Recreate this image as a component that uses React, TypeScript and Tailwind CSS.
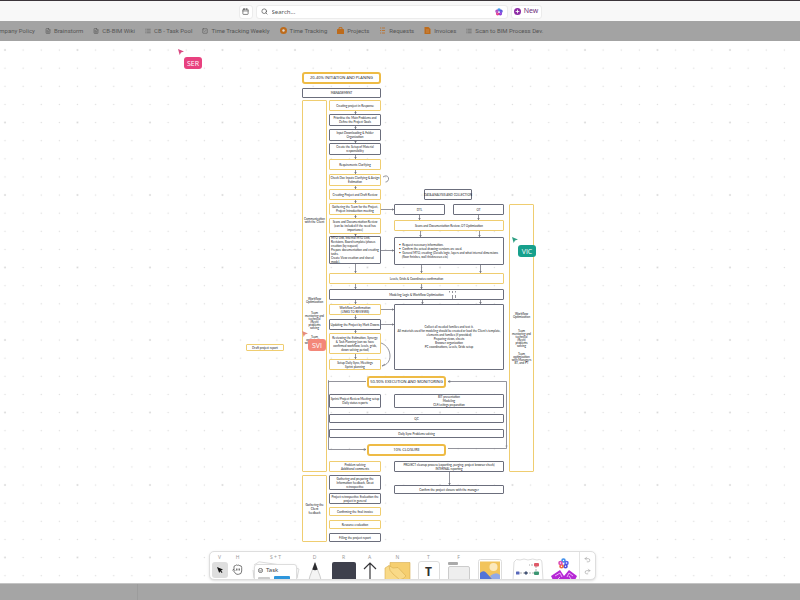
import React from "react";
import { Calendar, FileText, List, Plus, Search, SquareCheck, Undo2, Redo2 } from "lucide-react";

type Tone = "dark" | "yellow" | "title";

interface BoardNode {
  x: number;
  y: number;
  w: number;
  h: number;
  tone: Tone;
  lines: string[];
  text?: string;
}

const toneClass: Record<Tone, string> = {
  dark: "border border-[#6b6e7c] text-[#16171c] rounded-[1px] text-[3px] leading-[4px]",
  yellow: "border border-[#efcd70] text-[#16171c] rounded-[1px] text-[3px] leading-[4px]",
  title: "border-2 border-[#eebb45] text-[#101114] rounded-[3px] font-['Open_Sans',sans-serif] text-[4px] leading-[4px] font-medium",
};

const dense = "leading-[3px]";

const nodes: BoardNode[] = [
  { x: 302, y: 31, w: 79, h: 12, tone: "title", lines: ["20-40% INITIATION AND PLANING"] },
  { x: 302, y: 47, w: 79, h: 10, tone: "dark", lines: ["MANAGEMENT"] },
  { x: 329, y: 59, w: 52, h: 11, tone: "yellow", lines: ["Creating project in Response"] },
  { x: 329, y: 73, w: 52, h: 12, tone: "dark", lines: ["Prioritise the Main Problems and", "Define the Project Goals"] },
  { x: 329, y: 88, w: 52, h: 12, tone: "dark", lines: ["Input Downloading & Folder", "Organization"] },
  { x: 329, y: 102, w: 52, h: 12, tone: "dark", lines: ["Create the Setup of Material", "responsibility"] },
  { x: 329, y: 118, w: 52, h: 11, tone: "yellow", lines: ["Requirements Clarifying"] },
  { x: 329, y: 133, w: 52, h: 12, tone: "yellow", lines: ["Check Doc Inputs Clarifying & Assign", "Estimation"], text: dense },
  { x: 329, y: 148, w: 52, h: 11, tone: "yellow", lines: ["Creating Project and Draft Review"] },
  { x: 329, y: 162, w: 52, h: 12, tone: "yellow", lines: ["Gathering the Team for the Project,", "Project Introduction meeting"] },
  { x: 329, y: 177, w: 52, h: 16, tone: "yellow", lines: ["Scans and Documentation Review", "(can be included if the need has", "importance)"] },
  { x: 329, y: 195, w: 52, h: 28, tone: "dark", lines: ["MTO Link, Internal MTO Link,", "Revisions, Board template/phases", "creation (by request)", "Prepare documentation and creating", "tasks.", "Create View creation and shared", "model."], text: "leading-[3px] items-start pl-px" },
  { x: 329, y: 232, w: 175, h: 11, tone: "yellow", lines: ["Levels, Grids & Coordinates confirmation"] },
  { x: 329, y: 248, w: 175, h: 11, tone: "dark", lines: ["Modeling Logic & Workflow Optimization"] },
  { x: 329, y: 263, w: 52, h: 11, tone: "yellow", lines: ["Workflow Confirmation", "(LINKS TO REVIEWS)"], text: dense },
  { x: 329, y: 278, w: 52, h: 11, tone: "dark", lines: ["Updating the Project by Mark Downs"] },
  { x: 329, y: 292, w: 52, h: 21, tone: "yellow", lines: ["Reviewing the Estimation, Synergy", "& Task Planning (can we have", "confirmed workflow, levels, grids,", "down solving period)"] },
  { x: 329, y: 318, w: 52, h: 11, tone: "yellow", lines: ["Setup Daily Sync, Meetings", "Sprint planning"], text: dense },
  { x: 424, y: 148, w: 48, h: 11, tone: "dark", lines: ["DATA ANALYSIS AND COLLECTION"] },
  { x: 394, y: 163, w: 51, h: 11, tone: "dark", lines: ["DTL"] },
  { x: 453, y: 163, w: 51, h: 11, tone: "dark", lines: ["OT"] },
  { x: 394, y: 179, w: 110, h: 11, tone: "yellow", lines: ["Scans and Documentation Review, OT Optimization"] },
  { x: 394, y: 196, w: 110, h: 28, tone: "dark", lines: ["•  Request necessary information.", "•  Confirm the actual drawing versions are used.", "•  General MTO, creating (Details logic, layers and what internal dimensions", "    (floor finishes, wall thicknesses etc)"], text: "leading-[3px] items-start pl-1" },
  { x: 394, y: 263, w: 110, h: 66, tone: "dark", lines: ["Collect all needed families and test it.", "All materials used for modeling should be created or load the Client's template,", "elements and families (if provided)", "Preparing views, sheets", "Browser organization", "PC coordinations, Levels, Grids setup"], text: dense },
  { x: 367, y: 335, w: 79, h: 12, tone: "title", lines: ["50-90% EXECUTION AND MONITORING"] },
  { x: 329, y: 353, w: 52, h: 14, tone: "dark", lines: ["Sprint/Project Review Meeting setup", "Daily status reports"], text: dense },
  { x: 394, y: 353, w: 110, h: 14, tone: "dark", lines: ["BIT presentation", "Modeling", "CLF/estings preparation"], text: dense },
  { x: 329, y: 373, w: 175, h: 9, tone: "dark", lines: ["QC"] },
  { x: 329, y: 388, w: 175, h: 9, tone: "dark", lines: ["Daily Sync Problems solving"] },
  { x: 367, y: 403, w: 79, h: 12, tone: "title", lines: ["10% CLOSURE"] },
  { x: 329, y: 420, w: 52, h: 11, tone: "yellow", lines: ["Problem solving", "Additional comments"], text: dense },
  { x: 394, y: 420, w: 110, h: 11, tone: "dark", lines: ["PROJECT cleanup process (exporting, purging, project browser check)", "INTERNAL reporting"], text: dense },
  { x: 394, y: 444, w: 110, h: 9, tone: "dark", lines: ["Confirm the project closure with the manager"] },
  { x: 329, y: 434, w: 52, h: 15, tone: "dark", lines: ["Gathering and preparing the", "Information feedback, Great", "retrospective"] },
  { x: 329, y: 452, w: 52, h: 11, tone: "dark", lines: ["Project retrospective Evaluation the", "project in general"], text: dense },
  { x: 329, y: 466, w: 52, h: 9, tone: "yellow", lines: ["Confirming the final invoice"] },
  { x: 329, y: 479, w: 52, h: 9, tone: "yellow", lines: ["Resource evaluation"] },
  { x: 329, y: 492, w: 52, h: 9, tone: "dark", lines: ["Filling the project report"] },
  { x: 246, y: 303, w: 38, h: 7, tone: "yellow", lines: ["Draft project report"] },
  { x: 302, y: 59, w: 25, h: 372, tone: "yellow", lines: [] },
  { x: 302, y: 434, w: 25, h: 67, tone: "yellow", lines: ["Gathering the", "Client", "feedback"] },
  { x: 509, y: 163, w: 25, h: 268, tone: "yellow", lines: [] },
];

const captions = [
  { x: 302, y: 177, lines: ["Communication", "with the Client"] },
  { x: 302, y: 257, lines: ["Workflow", "Optimization"] },
  { x: 302, y: 271, lines: ["Team", "mentoring and", "technical", "(Revit)", "problems", "solving"] },
  { x: 302, y: 295, lines: ["Team", "optimization", "with Managers"] },
  { x: 509, y: 272, lines: ["Workflow", "Optimization"] },
  { x: 509, y: 289, lines: ["Team", "mentoring and", "technical", "(Revit)", "problems", "solving"] },
  { x: 509, y: 312, lines: ["Team", "optimization", "with Managers", "BT, and PT"] },
];

const down: [number, number, number][] = [
  [355, 70, 73], [355, 85, 88], [355, 100, 102], [355, 114, 118], [355, 129, 133],
  [355, 145, 148], [355, 159, 162], [355, 174, 177], [355, 193, 195], [355, 223, 232],
  [355, 243, 248], [355, 259, 263], [355, 274, 278], [355, 289, 292], [355, 313, 318],
  [419, 174, 179], [478, 174, 179], [420, 190, 196], [479, 190, 196], [421, 224, 232],
  [480, 224, 232], [421, 243, 248], [422, 259, 263], [480, 259, 263], [449, 431, 444],
];

const across = [168, 209, 268, 283];

function Connectors() {
  return (
    <svg className="absolute left-0 top-0 h-[542px] w-[800px]" fill="none" stroke="#777983" aria-hidden="true">
      {down.map(([x, a, b]) => (
        <g key={`${x}-${a}`}>
          <path d={`M${x + 0.5} ${a}V${b}`} strokeWidth="0.8" />
          <path d={`M${x - 0.8} ${b - 2}h2.6l-1.3 2z`} fill="#777983" stroke="none" />
        </g>
      ))}
      {across.map((y) => (
        <g key={y}>
          <path d={`M381 ${y + 0.5}H394`} strokeWidth="0.8" />
          <path d={`M392 ${y - 0.8}v2.6l2-1.3z`} fill="#777983" stroke="none" />
        </g>
      ))}
      <path d="M366 340.5H328.5V408.5H366M448 340.5H506.5V407.5H448" strokeWidth="0.8" />
      <path d="M328.5 339v3M364 407.500l2 1-2 1zM450 339.500l-2 1 2 1zM505.500 405h2" strokeWidth="0.6" />
      <path d="M381 302c6 2 9 8 9 13s-3 9-8 10M382 325l3-2" strokeWidth="0.8" />
      <path d="M383 136c3-2 5-1 5.500 1s-1 4-3 4" strokeWidth="0.8" />
      <path d="M449.500 250v1.500M452.500 250v2M455.500 250v1.500M452.500 254v4M455.500 254v3" strokeWidth="0.8" />
    </svg>
  );
}

function CursorTag({ name, x, y, tag, pointer }: { name: string; x: number; y: number; tag: string; pointer: string }) {
  return (
    <div className="absolute" style={{ left: x, top: y }}>
      <svg className={`size-[6px] ${pointer}`} viewBox="0 0 6 6" fill="currentColor" aria-hidden="true">
        <path d="M0 0l6 2.600-3 1-1.300 2.400z" />
      </svg>
      <span className={`ml-[6px] mt-[2px] flex h-3 w-[18px] items-center justify-center rounded-[3px] font-['Open_Sans',sans-serif] text-[7px] font-medium leading-none text-white ${tag}`}>
        {name}
      </span>
    </div>
  );
}

function Petals({ className }: { className: string }) {
  return (
    <svg className={className} viewBox="0 0 12 12" fill="none" strokeWidth="2.200" aria-hidden="true">
      <circle cx="6" cy="3" r="1.500" stroke="#3b9bea" />
      <circle cx="9" cy="5" r="1.500" stroke="#5a55d8" />
      <circle cx="8" cy="8.600" r="1.500" stroke="#8c3cdb" />
      <circle cx="4" cy="8.600" r="1.500" stroke="#e3408f" />
      <circle cx="3" cy="5" r="1.500" stroke="#b04fc4" />
      <circle cx="6" cy="6.200" r="1.200" fill="#fff" />
    </svg>
  );
}

function Header() {
  return (
    <header className="flex h-[21px] shrink-0 items-center justify-center gap-[3px] border-t border-[#3b353a] bg-[#f8f8f8] pr-5 pt-px">
      <button aria-label="Calendar" className="flex h-[14px] w-[14px] items-center justify-center rounded-[3px] border border-[#ececec] bg-white text-[#555]">
        <Calendar className="size-[7px]" strokeWidth={2.4} />
      </button>
      <label className="flex h-[14px] w-[252px] items-center rounded-[3px] border border-[#ececec] bg-white px-1">
        <Search className="size-[7px] shrink-0 text-[#555]" strokeWidth={2.4} />
        <input aria-label="Search" placeholder="Search..." className="ml-1 min-w-0 flex-1 bg-transparent text-[6px] leading-[8px] outline-none placeholder:text-[#555]" />
        <Petals className="size-2 shrink-0" />
      </label>
      <button className="flex h-[14px] w-[31px] items-center justify-center gap-[3px] rounded-[3px] border border-[#ececec] bg-white text-[7px] text-[#70307c]">
        <span className="flex size-[7px] items-center justify-center rounded-full bg-[#8d2ba5] text-white">
          <Plus className="size-[5px]" strokeWidth={4} />
        </span>
        New
      </button>
    </header>
  );
}

type Mark = "doc" | "list" | "check" | "ring" | "bag" | "rows" | "invoice" | "none";

function BookmarkIcon({ mark }: { mark: Mark }) {
  if (mark === "none") return null;
  if (mark === "doc") return <FileText className="size-[6px]" strokeWidth={2.2} />;
  if (mark === "list") return <List className="size-[6px]" strokeWidth={2.2} />;
  if (mark === "check") return <SquareCheck className="size-[6px]" strokeWidth={2.2} />;
  return (
    <svg className="size-[7px]" viewBox="0 0 7 7" fill="none" aria-hidden="true">
      {mark === "ring" && <><circle cx="3.500" cy="3.500" r="3.500" fill="#bd6b1b" /><circle cx="3.500" cy="3.500" r="1.200" fill="#ded8d0" /></>}
      {mark === "bag" && <><path d="M2 2V.7h3V2" stroke="#bd6b1b" /><rect y="2" width="7" height="5" rx=".6" fill="#bd6b1b" /></>}
      {mark === "rows" && <path d="M1 1h1.200M3 1h3M1 3.500h1.200M3 3.500h3M1 6h1.200M3 6h3" stroke="#b8763a" />}
      {mark === "invoice" && <><path d="M.5 0h4L6.500 2v5h-6z" fill="#bd6b1b" /><path d="M2 3h3M2 5h3" stroke="#cf9961" strokeWidth=".7" /></>}
    </svg>
  );
}

const bookmarks: { label: string; mark: Mark }[] = [
  { label: "Company Policy", mark: "none" },
  { label: "Brainstorm", mark: "doc" },
  { label: "CB-BIM Wiki", mark: "doc" },
  { label: "CB - Task Pool", mark: "list" },
  { label: "Time Tracking Weekly", mark: "check" },
  { label: "Time Tracking", mark: "ring" },
  { label: "Projects", mark: "bag" },
  { label: "Requests", mark: "rows" },
  { label: "Invoices", mark: "invoice" },
  { label: "Scan to BIM Process Dev.", mark: "list" },
];

function Bookmarks() {
  return (
    <nav className="flex h-5 shrink-0 items-center overflow-hidden bg-[#a3a3a3] pb-px">
      <div className="-ml-2 flex items-center gap-[10px] font-['Roboto',sans-serif]">
        {bookmarks.map(({ label, mark }) => (
          <a key={label} href="#" className="flex items-center gap-[3px] whitespace-nowrap text-[6px] leading-[8px] text-[#555]">
            <BookmarkIcon mark={mark} />
            {label}
          </a>
        ))}
      </div>
    </nav>
  );
}

function Tool({ shortcut, name, width, children }: { shortcut?: string; name: string; width: string; children: React.ReactNode }) {
  return (
    <button aria-label={name} className={`flex h-7 shrink-0 flex-col items-center ${width}`}>
      <span className="h-[10px] pt-[2px] text-[5px] leading-[7px] text-[#9a9a9a]">{shortcut}</span>
      {children}
    </button>
  );
}

function Toolbar() {
  return (
    <div role="toolbar" aria-label="Whiteboard tools" className="flex h-[29px] overflow-hidden rounded-[5px] border border-[#dedede] bg-white pl-px shadow-sm">
      <Tool shortcut="V" name="Select" width="w-[18px]">
        <span className="flex size-4 shrink-0 items-center justify-center rounded-[3px] bg-[#dedede]">
          <svg className="size-[6px]" viewBox="0 0 6 6" aria-hidden="true"><path d="M0 0l6 2.500-2 1 1.500 1.700-.8.7-1.500-1.700L2.200 6z" fill="#151515" /></svg>
        </span>
      </Tool>
      <Tool shortcut="H" name="Hand" width="w-[18px]">
        <svg className="mt-[2px] size-[11px]" viewBox="0 0 11 11" fill="none" stroke="#555" strokeWidth=".8" aria-hidden="true">
          <path d="M2 5.500V3Q2 1.500 3.500 1.500Q4.500.5 5.500 1.300Q7 .7 7.800 1.700Q9.700 1.500 9.700 3.500V7Q9.700 10.300 6.500 10.300H5Q3.300 10 2.500 8L1 6.500Q.8 5 2 5.500L3.300 7" />
          <path d="M4.500 4.500V6.500M6 4.500V6.500M7.500 4.500V6.500" />
        </svg>
      </Tool>
      <Tool shortcut="S + T" name="Task card" width="w-[58px]">
        <span className="relative flex h-[19px] w-[50px] justify-center">
          <svg className="absolute inset-0 h-[19px] w-[50px]" fill="#fff" stroke="#ddd" aria-hidden="true">
            <path d="M3 4L8 .8L30 4M44 7l4 1-2 9M3 17L2 9" />
          </svg>
          <span className="relative mt-[3px] h-[18px] w-[43px] rounded-[3px] border border-[#ddd] bg-white px-[3px] pt-[2px] shadow-sm">
            <span className="flex items-center gap-[3px] text-[6px] leading-[7px] text-[#444]">
              <svg className="size-[5px]" viewBox="0 0 5 5" fill="none" stroke="#444" strokeWidth=".7" aria-hidden="true"><circle cx="2.500" cy="2.500" r="2.100" /><path d="M1.500 2.500l.8.8 1.300-1.500" /></svg>
              Task
            </span>
            <span className="mt-[2px] flex gap-1">
              <span className="mt-px h-[3px] w-3 rounded-[1px] bg-[#ccc]" />
              <span className="h-1 w-4 rounded-[1px] bg-[#2e96dc]" />
            </span>
          </span>
        </span>
      </Tool>
      <Tool shortcut="D" name="Draw" width="w-5">
        <svg className="h-[18px] w-[14px] shrink-0" viewBox="0 0 14 18" aria-hidden="true">
          <path d="M7 1L2 14L1 18H13L12 14z" fill="#f4f4f4" stroke="#ccc" />
          <path d="M7 0L4.300 7.500Q7 9 9.700 7.500z" fill="#2d2d30" />
        </svg>
      </Tool>
      <Tool shortcut="R" name="Rectangle" width="w-[38px]">
        <span className="h-[18px] w-6 shrink-0 rounded-t-[2px] bg-[#3e404c]" />
      </Tool>
      <Tool shortcut="A" name="Arrow" width="w-[14px]">
        <svg className="h-[18px] w-[14px] shrink-0" viewBox="0 0 14 18" fill="none" stroke="#36363a" strokeWidth="1.200" aria-hidden="true"><path d="M7 18V1M1 7L7 1l6 6" /></svg>
      </Tool>
      <Tool shortcut="N" name="Sticky note" width="w-[42px]">
        <svg className="h-[18px] w-[27px] shrink-0" viewBox="0 0 27 18" stroke="#d6ad4f" strokeWidth=".6" aria-hidden="true">
          <path d="M6 .5H26V18H6z" fill="#f6cf70" />
          <path d="M1 6L5 3.500L9 6L14 5.500L22 14Q20 17 15 18H1z" fill="#f9da88" />
          <path d="M5 3.500Q5 9 9 12L16 18" fill="none" />
        </svg>
      </Tool>
      <Tool shortcut="T" name="Text" width="w-5">
        <span className="flex h-[21px] w-[22px] shrink-0 justify-center rounded-[3px] border border-[#ddd] bg-white pt-[2px] text-[12px] font-bold leading-[15px] text-[#303030]">T</span>
      </Tool>
      <Tool shortcut="F" name="Frame" width="w-10">
        <span className="mt-px flex w-[22px] shrink-0 flex-col">
          <span className="h-[3px] w-[10px] rounded-[1px] bg-[#aaa]" />
          <span className="mt-px h-4 rounded-[2px] border border-[#ccc] bg-[#eee]" />
        </span>
      </Tool>
      <Tool name="Image" width="w-[22px]">
        <svg className="-mt-px h-[21px] w-6 shrink-0" viewBox="0 0 24 21" aria-hidden="true">
          <rect x=".5" y=".5" width="23" height="24" rx="2" fill="#fff" stroke="#ddd" />
          <path d="M2 2.500H22V21H2z" fill="#f2c45c" /><circle cx="15.500" cy="8" r="4" fill="#fce9bd" />
          <path d="M2 14Q5 11 8 13.500L15 21H2z" fill="#5373d8" /><path d="M12 17Q18 12 22 16V21H15z" fill="#91a9e8" />
        </svg>
      </Tool>
      <Tool name="Diagrams" width="w-[54px]">
        <svg className="-mt-[3px] h-[22px] w-8 shrink-0" viewBox="0 0 32 22" fill="none" aria-hidden="true">
          <path d="M1 22L2 4Q4 0 8 2Q12 0 16 2Q21 0 25 2Q30 0 30 5L31 22z" fill="#fff" stroke="#ddd" />
          <path d="M8 15H24V7H17" stroke="#999" strokeDasharray="2 1" strokeWidth=".8" />
          <rect x="22" y="5" width="5" height="3.500" rx="1" fill="#df5968" /><rect x="22" y="13.500" width="5" height="3.500" rx="1" fill="#3b9672" />
          <rect x="4" y="13.500" width="3.500" height="3" rx=".6" fill="#5667ba" /><path d="M14 13l2 2-2 2-2-2z" fill="#455577" />
        </svg>
      </Tool>
      <Tool name="Apps" width="w-[18px]">
        <svg className="-mt-[3px] h-[22px] w-[26px] shrink-0" viewBox="0 0 26 22" fill="none" aria-hidden="true">
          <circle cx="12.500" cy="2.500" r="1.500" stroke="#3b8dec" strokeWidth="1.600" /><circle cx="15.500" cy="5" r="1.500" stroke="#5963ec" strokeWidth="1.600" />
          <circle cx="14.500" cy="8.300" r="1.500" stroke="#4c4fdc" strokeWidth="1.600" /><circle cx="10.500" cy="8.300" r="1.500" stroke="#f16b3d" strokeWidth="1.600" />
          <circle cx="9.500" cy="5" r="1.500" stroke="#dc4bb5" strokeWidth="1.600" />
          <path d="M0 18L9 12L13 18L18 12L26 18L24 22H2z" fill="#b528d5" /><path d="M4 18l5-3 2 4M16 19l2-4 4 3M9 19l-3 3M18 18l2 3" stroke="#f5bafd" strokeWidth=".9" />
        </svg>
      </Tool>
      <div className="ml-[6px] flex w-4 shrink-0 flex-col items-center justify-around border-l border-[#e4e4e4] py-[2px] text-[#999]">
        <button aria-label="Undo"><Undo2 className="size-[7px]" /></button>
        <button aria-label="Redo"><Redo2 className="size-[7px]" /></button>
      </div>
    </div>
  );
}

function Canvas() {
  return (
    <main className="relative min-h-[542px] flex-1 overflow-hidden bg-white">
      <svg className="absolute inset-0 h-full w-full" aria-hidden="true">
        <defs>
          <pattern id="dots" x="-4" y="0" width="18.125" height="18.125" patternUnits="userSpaceOnUse"><circle cx="9" cy="9" r=".7" fill="#dddddd" /></pattern>
          <pattern id="major" x="-4" y="0" width="72.500" height="72.500" patternUnits="userSpaceOnUse"><circle cx="9" cy="9" r=".8" fill="#cfcfcf" /></pattern>
        </defs>
        <rect width="100%" height="100%" fill="url(#dots)" />
        <rect width="100%" height="100%" fill="url(#major)" />
      </svg>
      <div className="absolute inset-0 font-['Lato',sans-serif]">
        {nodes.map((n) => (
          <div
            key={`${n.x}-${n.y}`}
            className={`absolute flex flex-col items-center justify-center whitespace-nowrap bg-white ${toneClass[n.tone]} ${n.text ?? ""}`}
            style={{ left: n.x, top: n.y, width: n.w, height: n.h }}
          >
            {n.lines.map((line) => (
              <p key={line} className="whitespace-pre">{line}</p>
            ))}
          </div>
        ))}
        {captions.map((c) => (
          <div key={`${c.x}-${c.y}`} className="absolute w-[25px] text-center text-[3px] leading-[3px] text-[#16171c]" style={{ left: c.x, top: c.y }}>
            {c.lines.map((line) => (
              <p key={line} className="whitespace-nowrap">{line}</p>
            ))}
          </div>
        ))}
      </div>
      <Connectors />
      <CursorTag name="SER" x={178} y={8} tag="bg-[#e8417f]" pointer="text-[#d94a83]" />
      <CursorTag name="VIC" x={512} y={196} tag="bg-[#17a08c]" pointer="text-[#2f9f83]" />
      <CursorTag name="SVI" x={302} y={290} tag="bg-[#f38779]" pointer="text-[#e58c80]" />
      <div className="absolute inset-x-0 bottom-[3px] flex justify-center pl-1">
        <Toolbar />
      </div>
    </main>
  );
}

export default function App() {
  return (
    <div className="flex min-h-screen flex-col bg-white font-['Noto_Sans',sans-serif]">
      <Header />
      <Bookmarks />
      <Canvas />
      <footer className="flex h-[17px] shrink-0 border-t border-[#c4c4c4] bg-[#a5a5a5]">
        <div className="w-[138px] border-r border-[#9c9c9c]" />
      </footer>
    </div>
  );
}
